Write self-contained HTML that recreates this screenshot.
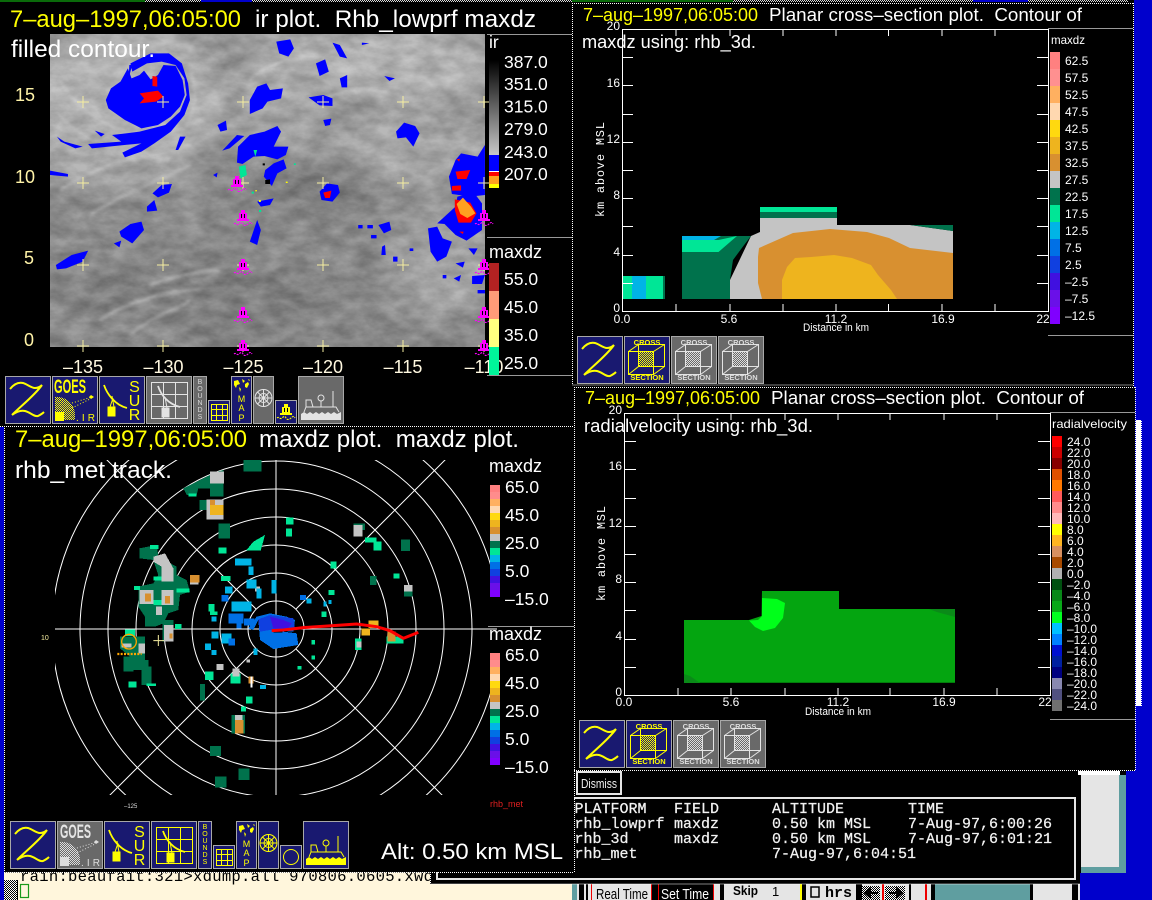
<!DOCTYPE html>
<html><head><meta charset="utf-8"><title>xdump</title>
<style>
html,body{margin:0;padding:0;background:#000;width:1152px;height:900px;overflow:hidden}
svg{display:block}
text{font-family:"Liberation Sans",sans-serif;white-space:pre}
.m{font-family:"Liberation Mono",monospace;font-size:15px;fill:#f2f2f2;stroke:#f2f2f2;stroke-width:.25}
.w{fill:#fff}.y{fill:#ff0}
.t{fill:#fff;font-size:12px}
.s{fill:#fff;font-size:11px}
.v{fill:#fff;font-size:17.5px}
.p{shape-rendering:crispEdges}
</style></head><body>
<svg width="1152" height="900" viewBox="0 0 1152 900" xmlns="http://www.w3.org/2000/svg">
<defs>
<clipPath id="satc"><rect x="50" y="34" width="435" height="313"/></clipPath>
<clipPath id="radc"><rect x="55" y="460" width="442" height="335"/></clipPath>
<filter id="bl" x="-20%" y="-20%" width="140%" height="140%"><feGaussianBlur stdDeviation="11"/></filter>
<filter id="bl2" x="-20%" y="-20%" width="140%" height="140%"><feGaussianBlur stdDeviation="1.500"/></filter>
<filter id="tb" color-interpolation-filters="sRGB" x="0" y="0" width="100%" height="100%"><feTurbulence type="fractalNoise" baseFrequency="0.045 0.08" numOctaves="4" seed="7"/><feColorMatrix type="matrix" values="1.6 0 0 0 -.3  1.6 0 0 0 -.3  1.6 0 0 0 -.3  0 0 0 0 .16"/></filter>
<pattern id="ck" width="2" height="2" patternUnits="userSpaceOnUse"><rect width="1" height="1" fill="#ff0"/><rect x="1" y="1" width="1" height="1" fill="#ff0"/></pattern>
<pattern id="ckw" width="2" height="2" patternUnits="userSpaceOnUse"><rect width="1" height="1" fill="#ddd"/><rect x="1" y="1" width="1" height="1" fill="#ddd"/></pattern>
<pattern id="ckb" width="2" height="2" patternUnits="userSpaceOnUse"><rect width="2" height="2" fill="#fff"/><rect width="1" height="1" fill="#000"/><rect x="1" y="1" width="1" height="1" fill="#000"/></pattern>
<symbol id="z" viewBox="0 0 46 48" width="46" height="48"><path d="M5 13C9 8 13 6 18 7C22 8 26 12 30 12C33 12 35 11 37 9C30 19 16 30 7 39C11 36 15 34 20 35C25 36 29 41 33 40C35 39 37 38 39 36" fill="none" stroke="currentColor" stroke-width="2"/></symbol>
<symbol id="sur" viewBox="0 0 46 48" width="46" height="48"><path d="M5 9C8 18 16 29 28 32" fill="none" stroke="currentColor" stroke-width="1.800"/><path d="M13 20L15 31M9 31H16V40H9ZM11 31L14 22" fill="currentColor" stroke="currentColor"/></symbol>
<symbol id="gr" viewBox="0 0 46 48" width="46" height="48"><path d="M5.500 6.500H41.500V42.500H5.500ZM17.500 6.500V42.500M29.500 6.500V42.500M5.500 18.500H41.500M5.500 30.500H41.500" fill="none" stroke="currentColor" stroke-width="1"/><path d="M12 10C15 19 22 28 34 31" fill="none" stroke="currentColor" stroke-width="1.800"/><path d="M19 21L21 32M16 32H23V41H16Z" fill="currentColor" stroke="currentColor"/></symbol>
<symbol id="sg" viewBox="0 0 22 23" width="22" height="23"><path d="M3.500 4.500H19.500V20.500H3.500ZM8.500 4.500V20.500M14.500 4.500V20.500M3.500 9.500H19.500M3.500 15.500H19.500" fill="none" stroke="currentColor"/></symbol>
<symbol id="gl" viewBox="0 0 21 48" width="21" height="48"><g fill="none" stroke="currentColor"><circle cx="10.500" cy="22" r="8.500"/><circle cx="10.500" cy="22" r="4.500"/><path d="M10.500 13V31M2 22H19M4.500 16L16.500 28M16.500 16L4.500 28"/></g></symbol>
<symbol id="bu" viewBox="0 0 22 23" width="22" height="23"><path d="M9 4H13V7H15V13H17V15H5V13H7V7H9Z" fill="currentColor"/><path d="M9 8H10V12H9ZM12 8H13V12H12Z" fill="#000"/><path d="M2 18C4 16 5 20 7 18S10 16 11 18S14 20 16 18S19 16 20 18" fill="none" stroke="currentColor" stroke-width="1.100" stroke-dasharray="2 1"/></symbol>
<symbol id="sh" viewBox="0 0 46 48" width="46" height="48"><g fill="none" stroke="currentColor"><path d="M6 36L8 31H15L13 24H8V31M15 31H38L41 36"/><circle cx="23" cy="22" r="3"/><path d="M23 25V31M35 15V31"/></g><path d="M3 44V38L6 36L9 38L12 36L15 38L18 36L21 38L24 36L27 38L30 36L33 38L36 36L39 38L43 36V44Z" fill="currentColor"/></symbol>
<symbol id="cr" viewBox="0 0 46 48" width="46" height="48"><g fill="none" stroke="currentColor"><path d="M4.500 15.500H29.500V38.500H4.500ZM14.500 8.500H40.500V30.500H14.500ZM4.500 15.500L14.500 8.500M29.500 15.500L40.500 8.500M29.500 38.500L40.500 30.500M4.500 38.500L14.500 30.500M14.500 8.500V30.500"/></g></symbol>
<symbol id="mp" viewBox="0 0 21 20" width="21" height="20"><path d="M3 5L7 4L9 8L6 9L5 12L3 9ZM11 3L14 5L12 7ZM14 8L17 6L18 8L16 12L14 11ZM8 11L10 13L9 16ZM17 3L19 4L18 5Z" fill="currentColor"/></symbol>
</defs>

<!-- desktop background -->
<rect width="1152" height="900" fill="#000"/>
<rect x="1126" y="0" width="26" height="900" fill="#0000cc"/>
<rect x="1080" y="873" width="72" height="27" fill="#0000cc"/>
<rect x="574" y="0" width="560" height="387" fill="#000"/>
<rect x="574" y="387" width="561" height="384" fill="#000"/>
<rect x="1135" y="420" width="7" height="286" fill="#fff"/>
<path d="M1135.500 420V706M1141.500 420V706" stroke="#0000cc" stroke-dasharray="1 1"/>
<rect x="1081" y="775" width="45" height="98" fill="#5f9ea0"/>
<rect x="1081" y="775" width="38" height="92" fill="#e5e5e5"/>
<rect x="1045" y="771" width="75" height="4" fill="#fff"/>

<!-- bottom bar -->
<g class="p">
<rect x="430" y="884" width="650" height="16" fill="#e5e5e5"/>
<rect x="430" y="884" width="142" height="16" fill="#fff6dc"/>
<rect x="572" y="884" width="5" height="16" fill="#5f9ea0"/>
<rect x="579" y="884" width="5" height="16" fill="#000"/><rect x="586" y="884" width="2" height="16" fill="#000"/>
<rect x="591" y="884" width="1" height="16" fill="#e00"/>
<rect x="651" y="884" width="1" height="16" fill="#e00"/>
<rect x="652" y="884" width="6" height="16" fill="#000"/>
<rect x="658" y="884" width="1" height="16" fill="#e00"/>
<rect x="659" y="884" width="54" height="16" fill="#000"/>
<rect x="713" y="884" width="1" height="16" fill="#e00"/>
<rect x="720" y="884" width="4" height="16" fill="#000"/>
<rect x="800" y="884" width="2" height="16" fill="#ff0"/>
<rect x="802" y="884" width="4" height="16" fill="#000"/>
<rect x="856" y="884" width="6" height="16" fill="#000"/>
<rect x="862" y="886" width="18" height="14" fill="url(#ckb)"/>
<rect x="882" y="884" width="2" height="16" fill="#e00"/>
<rect x="885" y="886" width="20" height="14" fill="url(#ckb)"/>
<rect x="909" y="884" width="2" height="16" fill="#000"/>
<rect x="925" y="884" width="2" height="16" fill="#e00"/>
<rect x="931" y="884" width="4" height="16" fill="#000"/>
<rect x="935" y="884" width="95" height="16" fill="#5f9ea0"/>
<rect x="1030" y="884" width="3" height="16" fill="#000"/>
<rect x="1072" y="884" width="6" height="16" fill="#000"/>
</g>
<text x="596" y="899" font-size="15" fill="#000" textLength="52" lengthAdjust="spacingAndGlyphs">Real Time</text>
<text x="661" y="899" font-size="15" fill="#fff" textLength="48" lengthAdjust="spacingAndGlyphs">Set Time</text>
<text x="733" y="895" font-size="13" font-weight="bold" fill="#000" textLength="25" lengthAdjust="spacingAndGlyphs">Skip</text>
<text x="772" y="896" font-size="13" fill="#000">1</text>
<rect x="811" y="887" width="8" height="10" fill="none" stroke="#000" stroke-width="1.500"/>
<text x="825" y="897" font-size="15" font-weight="bold" fill="#000" style="font-family:'Liberation Mono',monospace">hrs</text>
<path d="M865 893H878M865 893L870 889V897Z" stroke="#000" stroke-width="2" fill="#000"/>
<path d="M889 893H902M902 893L897 889V897Z" stroke="#000" stroke-width="2" fill="#000"/>

<!-- terminal -->
<rect x="0" y="872" width="430" height="28" fill="#fff6dc"/>
<rect x="0" y="427" width="4" height="473" fill="#0000cc"/>
<rect x="4" y="880" width="13" height="20" fill="url(#ckb)"/>
<rect x="17" y="880" width="1" height="20" fill="#000"/>
<text x="20" y="881" style="font-family:'Liberation Mono',monospace;font-size:15.600px" fill="#000" textLength="413" lengthAdjust="spacing">rain:beaufait:321&gt;xdump.all 970806.0605.xwd</text>
<rect x="20.500" y="884.500" width="8" height="13" fill="none" stroke="#1a9a1a" stroke-width="1.200"/>
<rect x="4" y="868" width="570" height="4.500" fill="#000"/>

<!-- table panel -->
<rect x="430" y="771" width="648" height="113" fill="#000"/>
<path d="M574 798H1075V879H437V872" fill="none" stroke="#e6e6e6" stroke-width="2"/>
<path d="M430.500 884H1080M430.500 872V884" stroke="#fff" stroke-dasharray="1 1" fill="none"/>
<rect x="577" y="772" width="44" height="22" fill="#000" stroke="#e6e6e6" stroke-width="2"/>
<text x="581" y="788" font-size="13" fill="#eee" textLength="36" lengthAdjust="spacingAndGlyphs">Dismiss</text>
<text class="m" x="574.500" y="813">PLATFORM</text><text class="m" x="674" y="813">FIELD</text><text class="m" x="772" y="813">ALTITUDE</text><text class="m" x="908" y="813">TIME</text>
<text class="m" x="574.500" y="828">rhb_lowprf</text><text class="m" x="674" y="828">maxdz</text><text class="m" x="772" y="828">0.50 km MSL</text><text class="m" x="908" y="828">7-Aug-97,6:00:26</text>
<text class="m" x="574.500" y="843">rhb_3d</text><text class="m" x="674" y="843">maxdz</text><text class="m" x="772" y="843">0.50 km MSL</text><text class="m" x="908" y="843">7-Aug-97,6:01:21</text>
<text class="m" x="574.500" y="858">rhb_met</text><text class="m" x="772" y="858">7-Aug-97,6:04:51</text>

<!-- top strips -->
<g class="p">
<rect x="0" y="0" width="145" height="2" fill="#0a6a0a"/>
<rect x="145" y="0" width="56" height="2" fill="url(#ckw)"/>
<rect x="201" y="0" width="51" height="2" fill="#0000cc"/>
<rect x="252" y="0" width="320" height="2" fill="url(#ckw)"/>
<rect x="572" y="0" width="161" height="2" fill="#0a6a0a"/>
<rect x="733" y="0" width="240" height="2" fill="url(#ckw)"/>
<rect x="973" y="0" width="55" height="2" fill="#0000cc"/>
<rect x="1028" y="0" width="100" height="2" fill="url(#ckw)"/>
</g>

<!-- SATELLITE -->
<g clip-path="url(#satc)">
<rect x="50" y="34" width="435" height="313" fill="#8a8a8a"/>
<g filter="url(#bl)">
<ellipse cx="130" cy="95" rx="100" ry="70" fill="#bcbcbc"/>
<ellipse cx="280" cy="65" rx="120" ry="40" fill="#b0b0b0"/>
<ellipse cx="410" cy="65" rx="90" ry="40" fill="#bbb"/>
<ellipse cx="400" cy="150" rx="70" ry="40" fill="#acacac"/>
<ellipse cx="70" cy="150" rx="40" ry="30" fill="#b0b0b0"/>
<ellipse cx="130" cy="175" rx="80" ry="18" fill="#a8a8a8"/>
<ellipse cx="440" cy="265" rx="55" ry="55" fill="#a8a8a8"/>
<ellipse cx="475" cy="170" rx="18" ry="60" fill="#b2b2b2"/>
<ellipse cx="280" cy="130" rx="55" ry="25" fill="#aaa"/>
<ellipse cx="230" cy="60" rx="22" ry="20" fill="#8e8e8e"/>
<ellipse cx="320" cy="185" rx="60" ry="25" fill="#7e7e7e"/>
<ellipse cx="200" cy="300" rx="140" ry="35" fill="#7f7f7f"/>
<ellipse cx="110" cy="330" rx="70" ry="16" fill="#8c8c8c"/>
<ellipse cx="350" cy="290" rx="50" ry="30" fill="#888"/>
<ellipse cx="140" cy="220" rx="80" ry="30" fill="#8e8e8e"/>
</g>
<g filter="url(#bl2)" fill="none" stroke="#d4d4d4" stroke-width="2" opacity=".8">
<path d="M60 80C90 130 150 150 200 120M55 110C90 150 140 165 190 145M190 70C200 95 195 120 175 140M60 190C100 165 140 150 170 160M90 215C130 190 160 180 190 165"/>
<path d="M150 285C175 275 200 272 220 270M100 320C130 300 170 290 200 290M130 335C160 310 180 310 190 300M250 80C270 60 310 50 340 60M300 110C330 90 370 85 400 95"/>
</g>
<rect x="50" y="34" width="435" height="313" filter="url(#tb)"/>
<g transform="scale(.36738 .33333)">
<path fill="#00f" d="M288 300L302 265L328 245L348 205L358 235L380 225L392 212L410 238L430 225L445 195L478 198L497 240L503 285L490 320L465 350L430 375L385 385L340 360L295 325Z"/>
<path fill="#00f" d="M355 190L410 160L460 160L495 190L512 250L517 300L502 345L465 395L420 430L385 455L340 472L333 458L385 430L250 445L240 432L330 425L305 405L380 395L450 375L490 335L508 285L502 235L478 195L440 185L400 190L360 215Z"/>
<path fill="#00f" d="M155 410L175 425L225 440L205 445L165 425ZM258 392L285 402L275 410ZM490 410L505 410L485 450L478 450ZM352 195L360 195L350 235Z"/>
<path fill="#f00" d="M380 280L430 272L445 290L425 305L380 310L392 295ZM415 228L428 230L428 260L415 258Z"/>
<path fill="#00f" d="M752 125L790 118L800 145L785 170L760 160ZM905 128L925 135L945 175L925 170ZM860 190L885 178L895 215L870 228ZM925 235L945 225L945 262L930 262ZM1046 228L1075 235L1060 243ZM985 128L1005 130L985 135Z"/>
<path fill="#00f" d="M680 300L700 260L725 250L735 270L770 265L765 295L728 305L715 325L680 342ZM840 292L880 285L905 295L905 318L870 316ZM592 375L615 362L618 390L600 395ZM880 360L902 356L898 375L885 378Z"/>
<path fill="#00f" d="M1078 395L1100 368L1130 378L1142 400L1125 440L1105 412L1082 415ZM605 452L645 405L665 408L625 445ZM648 440L680 405L720 395L755 378L765 395L745 440L785 440L778 465L755 478L720 468L690 470L660 492L645 488ZM722 510L745 490L772 478L780 505L755 520L740 558L718 530Z"/>
<path fill="#00f" d="M870 575L890 550L920 555L925 578L905 605L875 600ZM415 580L440 555L468 552L460 578L430 592ZM400 620L420 600L428 632L400 635ZM325 695L355 672L385 665L392 690L360 730L330 710ZM310 730L330 722L325 742ZM152 795L195 765L240 752L225 785L180 805L155 808ZM136 512L185 522L185 530L136 525ZM580 525L592 518L590 532ZM680 725L700 660L710 690L700 735ZM700 605L745 595L735 615L710 620Z"/>
<path fill="#00f" d="M1030 675L1060 665L1065 690L1045 700ZM1040 740L1048 735L1050 765L1038 765ZM1165 685L1190 680L1205 715L1230 725L1215 770L1190 785L1172 755ZM975 675h12v10h-12ZM1000 675h15v10h-15ZM1010 705h15v10h-15ZM1070 770h12v15h-12ZM1115 745h10v8h-10Z"/>
<path fill="#00f" d="M1222 530L1240 480L1255 460L1300 470L1320 435V585L1280 590L1230 582ZM1190 670L1240 620L1245 590L1290 578L1312 610L1312 690L1270 722L1240 705L1210 672ZM1275 745L1300 745L1290 765ZM1240 790L1265 785L1260 803ZM1285 828L1320 825L1312 852L1285 852ZM1235 835L1255 825L1250 845ZM1205 825h10v10h-10ZM1300 870h20v10h-20Z"/>
<path fill="#f00" d="M1240 515L1280 510L1270 537L1245 537ZM1230 558L1255 556L1255 572L1230 572ZM1243 478L1252 476L1250 485ZM1238 598L1280 608L1297 640L1282 668L1248 668L1238 630ZM880 578L902 572L898 594L885 594ZM1250 695L1262 695L1260 702Z"/>
<path fill="#ffa020" d="M1243 612L1260 593L1282 620L1294 640L1272 654L1253 642Z"/>
<path fill="#00e696" d="M650 500L668 495L672 525L655 535ZM690 450L700 450L695 470Z"/>
<path fill="#000" d="M722 540L735 538L735 552L722 552ZM715 490h6v6h-6Z"/>
<path fill="#ff0" d="M695 570h4v4h-4ZM705 600h5v6h-5ZM778 545h5v4h-5Z"/>
<path fill="#00e696" d="M685 575h6v6h-6ZM705 630h6v6h-6ZM800 490h5v5h-5Z"/>
</g>
</g>
<!-- crosses -->
<path d="M77 102H89M83 96V108M157 102H169M163 96V108M237 102H249M243 96V108M317 102H329M323 96V108M397 102H409M403 96V108M478 102H490M484 96V108M77 183H89M83 177V189M157 183H169M163 177V189M237 183H249M243 177V189M317 183H329M323 177V189M397 183H409M403 177V189M478 183H490M484 177V189M77 265H89M83 259V271M157 265H169M163 259V271M237 265H249M243 259V271M317 265H329M323 259V271M397 265H409M403 259V271M478 265H490M484 259V271M77 346H89M83 340V352M157 346H169M163 340V352M237 346H249M243 340V352M317 346H329M323 340V352M397 346H409M403 340V352M478 346H490M484 340V352" stroke="#f6eea0" stroke-width="1" fill="none"/>
<g style="color:#ff00ff">
<use href="#bu" x="226" y="172" width="22" height="23"/><use href="#bu" x="232" y="206" width="22" height="23"/><use href="#bu" x="232" y="255" width="22" height="23"/><use href="#bu" x="232" y="303" width="22" height="23"/><use href="#bu" x="232" y="336" width="22" height="23"/><use href="#bu" x="473" y="206" width="22" height="23"/><use href="#bu" x="473" y="255" width="22" height="23"/><use href="#bu" x="473" y="303" width="22" height="23"/><use href="#bu" x="473" y="336" width="22" height="23"/>
</g>

<!-- top-left titles and axes -->
<text class="y" x="10" y="27" font-size="24" textLength="231" lengthAdjust="spacingAndGlyphs">7–aug–1997,06:05:00</text>
<text class="w" x="255" y="27" font-size="24" textLength="281" lengthAdjust="spacingAndGlyphs">ir plot.  Rhb_lowprf maxdz</text>
<text class="w" x="11" y="57" font-size="24" textLength="144" lengthAdjust="spacingAndGlyphs">filled contour.</text>
<g fill="#fff3a8" font-size="18"><text x="15" y="101">15</text><text x="15" y="183">10</text><text x="24" y="264">5</text><text x="24" y="346">0</text></g>
<g fill="#fff8e0" font-size="18" text-anchor="middle"><text x="83" y="373">–135</text><text x="163.500" y="373">–130</text><text x="243.500" y="373">–125</text><text x="323" y="373">–120</text><text x="403" y="373">–115</text><text x="484" y="373">–110</text></g>
<!-- ir bar -->
<path d="M487 34.500H572M487 237.500H572M487 375.500H572" stroke="#999"/>
<text class="v" x="489" y="48">ir</text>
<linearGradient id="irg" x1="0" y1="0" x2="0" y2="1"><stop offset="0" stop-color="#000"/><stop offset="1" stop-color="#c8c8c8"/></linearGradient>
<rect x="489" y="60" width="10" height="95" fill="url(#irg)"/>
<g class="p"><rect x="489" y="155" width="10" height="16" fill="#00f"/><rect x="489" y="171" width="10" height="1" fill="#fff"/><rect x="489" y="172" width="10" height="4" fill="#f00"/><rect x="489" y="176" width="10" height="8" fill="#ffa020"/><rect x="489" y="184" width="10" height="4" fill="#ff0"/></g>
<g class="v"><text x="504" y="68">387.0</text><text x="504" y="90">351.0</text><text x="504" y="112.500">315.0</text><text x="504" y="135">279.0</text><text x="504" y="158">243.0</text><text x="504" y="180">207.0</text></g>
<text class="w" x="489" y="258" font-size="18">maxdz</text>
<g class="p"><rect x="489" y="263" width="10" height="28" fill="#b22222"/><rect x="489" y="291" width="10" height="28" fill="#ff9b78"/><rect x="489" y="319" width="10" height="28" fill="#ffff80"/><rect x="489" y="347" width="10" height="28" fill="#00f59a"/></g>
<g class="v"><text x="504" y="285">55.0</text><text x="504" y="313">45.0</text><text x="504" y="341">35.0</text><text x="504" y="369">25.0</text></g>

<!-- top-left buttons -->
<g stroke="#a8a8a8" class="p">
<rect x="5.500" y="376.500" width="45" height="47" fill="#191970"/><rect x="52.500" y="376.500" width="45" height="47" fill="#191970"/><rect x="99.500" y="376.500" width="45" height="47" fill="#191970"/><rect x="146.500" y="376.500" width="45" height="47" fill="#696969"/><rect x="193.500" y="376.500" width="13" height="47" fill="#696969"/><rect x="208.500" y="400.500" width="21" height="23" fill="#191970"/><rect x="231.500" y="376.500" width="20" height="47" fill="#191970"/><rect x="253.500" y="376.500" width="20" height="47" fill="#696969"/><rect x="275.500" y="400.500" width="21" height="23" fill="#191970"/><rect x="298.500" y="376.500" width="45" height="47" fill="#696969"/>
</g>
<g style="color:#ff0"><use href="#z" x="5" y="376" width="46" height="48"/><use href="#sur" x="99" y="376" width="46" height="48"/><use href="#sg" x="208" y="400" width="22" height="23"/><use href="#mp" x="231" y="376" width="21" height="20"/><use href="#bu" x="275" y="400" width="22" height="23"/></g>
<g style="color:#e4e4e4"><use href="#gr" x="146" y="376" width="46" height="48"/><use href="#gl" x="253" y="376" width="21" height="48"/><use href="#sh" x="298" y="376" width="46" height="48"/></g>
<text x="54" y="393" font-size="19" font-weight="bold" fill="#ff0" textLength="32" lengthAdjust="spacingAndGlyphs">GOES</text>
<path d="M55 420V397A18 18 0 0 1 75 416V420Z" fill="url(#ck)"/><path d="M72 403L92 397M72 408L90 399" stroke="#ff0" stroke-dasharray="1 2"/><path d="M91 395l3 2-3 2-2-2z" fill="#ff0"/><rect x="55" y="412" width="9" height="9" fill="#ff0"/>
<text x="76" y="421" font-size="10" fill="#ff0" textLength="19" lengthAdjust="spacing">.IR</text>
<g font-size="16" fill="#ff0" text-anchor="middle"><text x="134.500" y="392">S</text><text x="134.500" y="406">U</text><text x="134.500" y="420">R</text></g>
<g font-size="7" fill="#d8d8d8" text-anchor="middle"><text x="200" y="384">B</text><text x="200" y="391">O</text><text x="200" y="398">U</text><text x="200" y="405">N</text><text x="200" y="412">D</text><text x="200" y="419">S</text></g>
<g font-size="9" fill="#ff0" text-anchor="middle"><text x="241.500" y="402">M</text><text x="241.500" y="411">A</text><text x="241.500" y="421">P</text></g>

<!-- dotted frames -->
<g fill="none" stroke="#fff" stroke-dasharray="1 1">
<path d="M0 426.500H573M4.500 426V872M574.500 427V872M4 872.500H574"/>
<path d="M572.500 3V385H1133M572 3.500H1133M1133.500 3V386"/>
<path d="M574.500 387V770M574 387.500H1135M1135.500 387V770.500H574"/>
</g>

<!-- RADAR -->
<g clip-path="url(#radc)">
<g fill="none" stroke="#fff" stroke-width="1">
<circle cx="276" cy="629" r="28"/><circle cx="276" cy="629" r="56"/><circle cx="276" cy="629" r="84"/><circle cx="276" cy="629" r="112"/><circle cx="276" cy="629" r="140"/><circle cx="276" cy="629" r="168"/><circle cx="276" cy="629" r="196"/><circle cx="276" cy="629" r="224"/>
<path d="M55 629H497M276 460V795M256 609L86 439M296 609L466 439M256 649L90 815M296 649L462 815"/>
</g>
<g transform="translate(40 460) scale(.33333)" class="p">
<g fill="#00724c">
<path d="M430 85L510 45V40L550 30V110H510V85H475L470 105H440Z"/>
<rect x="610" y="0" width="55" height="35"/><rect x="535" y="190" width="35" height="45"/><rect x="478" y="120" width="30" height="30"/>
<path d="M298 265L350 255L355 290L410 320L410 345L440 360L450 395L420 405L415 450L385 460L370 490L345 500H315V470L295 440V380L340 370L355 345L340 300L298 295Z"/>
<rect x="368" y="480" width="32" height="65"/>
<path d="M240 530H315V600H325V630H280V635H250V590H270L240 565Z"/><path d="M305 620H335V675H305Z"/>
<rect x="990" y="348" width="20" height="27"/><rect x="1083" y="238" width="27" height="35"/><rect x="1092" y="385" width="25" height="25"/><rect x="940" y="190" width="35" height="20"/>
<rect x="480" y="672" width="15" height="50"/><rect x="510" y="858" width="33" height="30"/><rect x="595" y="925" width="33" height="35"/><rect x="525" y="950" width="35" height="32"/><rect x="575" y="765" width="40" height="55"/>
</g>
<g fill="#00e696">
<rect x="340" y="350" width="45" height="12"/><rect x="282" y="378" width="18" height="12"/><rect x="410" y="385" width="38" height="12"/><rect x="330" y="255" width="25" height="12"/><rect x="445" y="100" width="25" height="10"/>
<path d="M618 272L640 245L675 225L662 272Z"/><rect x="535" y="262" width="25" height="18"/><rect x="738" y="172" width="22" height="22"/><rect x="738" y="205" width="18" height="25"/>
<rect x="975" y="232" width="35" height="15"/><rect x="1000" y="245" width="25" height="27"/><rect x="1060" y="340" width="18" height="15"/><rect x="872" y="305" width="17" height="20"/><rect x="866" y="390" width="18" height="15"/>
<rect x="405" y="492" width="20" height="15"/><rect x="255" y="508" width="30" height="20"/><rect x="265" y="665" width="25" height="18"/><rect x="320" y="670" width="28" height="8"/><rect x="340" y="420" width="25" height="15"/>
<rect x="543" y="348" width="28" height="15"/><rect x="505" y="432" width="18" height="22"/><rect x="510" y="455" width="22" height="10"/><rect x="495" y="635" width="25" height="25"/><rect x="572" y="640" width="30" height="30"/><rect x="618" y="710" width="20" height="20"/><rect x="603" y="740" width="15" height="15"/><rect x="575" y="462" width="18" height="15"/><rect x="1040" y="530" width="50" height="20"/><rect x="945" y="535" width="20" height="35"/><rect x="815" y="587" width="10" height="12"/><rect x="845" y="455" width="14" height="16"/><rect x="772" y="618" width="12" height="10"/><rect x="815" y="540" width="10" height="14"/>
</g>
<g fill="#c4c4c4">
<rect x="510" y="35" width="42" height="35"/><rect x="500" y="118" width="50" height="60"/>
<path d="M340 290L375 280L400 325V365H365V320L340 305Z"/><rect x="298" y="390" width="42" height="42"/><rect x="365" y="390" width="35" height="45"/><rect x="348" y="440" width="18" height="25"/><rect x="372" y="495" width="28" height="50"/><rect x="245" y="550" width="30" height="12"/><rect x="295" y="550" width="20" height="30"/>
<rect x="940" y="195" width="28" height="35"/><rect x="1092" y="375" width="25" height="20"/><rect x="950" y="545" width="15" height="18"/>
<rect x="530" y="612" width="20" height="18"/><rect x="578" y="625" width="20" height="25"/><rect x="585" y="765" width="22" height="20"/><rect x="645" y="380" width="15" height="15"/><rect x="620" y="598" width="10" height="10"/><rect x="450" y="365" width="25" height="8"/>
</g>
<g fill="#d89030">
<rect x="450" y="345" width="28" height="22"/><rect x="315" y="400" width="18" height="25"/><rect x="375" y="408" width="15" height="22"/><rect x="388" y="520" width="10" height="15"/><rect x="1042" y="515" width="25" height="30"/><rect x="585" y="780" width="25" height="40"/><rect x="510" y="120" width="15" height="15"/><rect x="625" y="650" width="15" height="20"/>
</g>
<g fill="#eeb41e"><rect x="510" y="135" width="40" height="30"/><rect x="965" y="505" width="25" height="22"/><rect x="985" y="482" width="30" height="22"/></g>
<g fill="#00b4e6">
<rect x="585" y="295" width="50" height="22"/><rect x="625" y="320" width="15" height="25"/><rect x="620" y="358" width="30" height="28"/><rect x="650" y="385" width="15" height="30"/><rect x="695" y="360" width="15" height="40"/><rect x="555" y="380" width="22" height="20"/><rect x="515" y="470" width="15" height="15"/><rect x="575" y="425" width="60" height="30"/><rect x="515" y="515" width="20" height="20"/><rect x="545" y="520" width="30" height="30"/><rect x="495" y="550" width="18" height="20"/><rect x="515" y="570" width="15" height="15"/><rect x="660" y="675" width="18" height="12"/><rect x="640" y="565" width="12" height="20"/><rect x="865" y="420" width="10" height="12"/><rect x="850" y="425" width="10" height="15"/><rect x="800" y="415" width="15" height="15"/>
</g>
<g fill="#0070e6">
<rect x="545" y="405" width="20" height="20"/><rect x="565" y="460" width="45" height="30"/><rect x="590" y="490" width="15" height="15"/><rect x="612" y="475" width="32" height="22"/><rect x="780" y="405" width="18" height="15"/><rect x="565" y="535" width="20" height="22"/>
<path d="M690 510L770 520L775 555L700 567L660 540L655 480L640 510L625 505L650 470L690 460L740 470L765 480L760 515Z"/>
</g>
<g fill="#1040e0"><path d="M690 465L760 475L765 505L730 515L690 510L660 515L655 478Z"/></g>
<g fill="#4010e0"><path d="M690 470L730 480L755 490L745 505L700 505Z"/></g>
<rect x="700" y="508" width="28" height="10" fill="#000"/>
<rect x="632" y="650" width="6" height="32" fill="#fff"/>
</g>
<g transform="translate(40 460) scale(.33333)">
<circle cx="267" cy="545" r="22" fill="none" stroke="#ffa500" stroke-width="4"/>
<path d="M232 582H305" stroke="#ffa500" stroke-width="7" stroke-dasharray="6 4"/>
<path d="M340 542H372M355 525V558" stroke="#f6eea0" stroke-width="3"/>
<path d="M695 512L730 510L790 503L880 497L950 492L1010 500L1050 512L1090 535L1135 517" fill="none" stroke="#f00" stroke-width="9"/>
</g>
</g>

<!-- bottom-left labels -->
<text class="y" x="15" y="447" font-size="24" textLength="232" lengthAdjust="spacingAndGlyphs">7–aug–1997,06:05:00</text>
<text class="w" x="259" y="447" font-size="24" textLength="260" lengthAdjust="spacingAndGlyphs">maxdz plot.  maxdz plot.</text>
<text class="w" x="15" y="478" font-size="24" textLength="157" lengthAdjust="spacingAndGlyphs">rhb_met track.</text>
<text x="489" y="472" font-size="18" class="w">maxdz</text>
<path d="M488 626.500H574" stroke="#999"/>
<text x="489" y="640" font-size="18" class="w">maxdz</text>
<g class="p">
<rect x="490" y="485" width="10" height="7" fill="#ff8080"/><rect x="490" y="492" width="10" height="7" fill="#ff8c8c"/><rect x="490" y="499" width="10" height="7" fill="#ffb060"/><rect x="490" y="506" width="10" height="7" fill="#ffd8b0"/><rect x="490" y="513" width="10" height="7" fill="#ffd90f"/><rect x="490" y="520" width="10" height="7" fill="#eeb41e"/><rect x="490" y="527" width="10" height="7" fill="#d89030"/><rect x="490" y="534" width="10" height="7" fill="#c4c4c4"/><rect x="490" y="541" width="10" height="7" fill="#00724c"/><rect x="490" y="548" width="10" height="7" fill="#00e696"/><rect x="490" y="555" width="10" height="7" fill="#00b4e6"/><rect x="490" y="562" width="10" height="7" fill="#0070e6"/><rect x="490" y="569" width="10" height="7" fill="#1040e0"/><rect x="490" y="576" width="10" height="7" fill="#4010e0"/><rect x="490" y="583" width="10" height="7" fill="#6a10e8"/><rect x="490" y="590" width="10" height="7" fill="#8000ff"/>
<rect x="490" y="653" width="10" height="7" fill="#ff8080"/><rect x="490" y="660" width="10" height="7" fill="#ff8c8c"/><rect x="490" y="667" width="10" height="7" fill="#ffb060"/><rect x="490" y="674" width="10" height="7" fill="#ffd8b0"/><rect x="490" y="681" width="10" height="7" fill="#ffd90f"/><rect x="490" y="688" width="10" height="7" fill="#eeb41e"/><rect x="490" y="695" width="10" height="7" fill="#d89030"/><rect x="490" y="702" width="10" height="7" fill="#c4c4c4"/><rect x="490" y="709" width="10" height="7" fill="#00724c"/><rect x="490" y="716" width="10" height="7" fill="#00e696"/><rect x="490" y="723" width="10" height="7" fill="#00b4e6"/><rect x="490" y="730" width="10" height="7" fill="#0070e6"/><rect x="490" y="737" width="10" height="7" fill="#1040e0"/><rect x="490" y="744" width="10" height="7" fill="#4010e0"/><rect x="490" y="751" width="10" height="7" fill="#6a10e8"/><rect x="490" y="758" width="10" height="7" fill="#8000ff"/>
</g>
<g class="v"><text x="505" y="493">65.0</text><text x="505" y="521">45.0</text><text x="505" y="549">25.0</text><text x="505" y="577">5.0</text><text x="505" y="605">–15.0</text><text x="505" y="661">65.0</text><text x="505" y="689">45.0</text><text x="505" y="717">25.0</text><text x="505" y="745">5.0</text><text x="505" y="773">–15.0</text></g>
<text x="490" y="807" font-size="9" fill="#e02020">rhb_met</text>
<text x="124" y="808" font-size="6" fill="#ddd">–125</text>
<text x="41" y="640" font-size="7" fill="#f6eea0">10</text>
<text class="w" x="381" y="859" font-size="22" textLength="182" lengthAdjust="spacingAndGlyphs">Alt: 0.50 km MSL</text>

<!-- bottom-left buttons -->
<g stroke="#a8a8a8" class="p">
<rect x="10.500" y="821.500" width="45" height="47" fill="#191970"/><rect x="57.500" y="821.500" width="45" height="47" fill="#696969"/><rect x="104.500" y="821.500" width="45" height="47" fill="#191970"/><rect x="151.500" y="821.500" width="45" height="47" fill="#191970"/><rect x="198.500" y="821.500" width="13" height="47" fill="#191970"/><rect x="213.500" y="845.500" width="21" height="23" fill="#191970"/><rect x="236.500" y="821.500" width="20" height="47" fill="#191970"/><rect x="258.500" y="821.500" width="20" height="47" fill="#191970"/><rect x="280.500" y="845.500" width="21" height="23" fill="#191970"/><rect x="303.500" y="821.500" width="45" height="47" fill="#191970"/>
</g>
<g style="color:#ff0"><use href="#z" x="10" y="821" width="46" height="48"/><use href="#sur" x="104" y="821" width="46" height="48"/><use href="#gr" x="151" y="821" width="46" height="48"/><use href="#mp" x="236" y="821" width="21" height="20"/><use href="#gl" x="258" y="821" width="21" height="48"/><use href="#sh" x="303" y="821" width="46" height="48"/></g>
<use href="#sg" x="213" y="845" width="22" height="23" style="color:#ff0"/>
<circle cx="291" cy="857" r="7.500" fill="none" stroke="#ff0"/>
<text x="60" y="838" font-size="19" font-weight="bold" fill="#e4e4e4" textLength="31" lengthAdjust="spacingAndGlyphs">GOES</text>
<path d="M60 865V842A18 18 0 0 1 80 861V865Z" fill="url(#ckw)"/><path d="M77 848L97 842M77 853L95 844" stroke="#ddd" stroke-dasharray="1 2"/><path d="M96 840l3 2-3 2-2-2z" fill="#ddd"/><rect x="60" y="857" width="9" height="9" fill="#ddd"/>
<text x="81" y="866" font-size="10" fill="#ddd" textLength="19" lengthAdjust="spacing">.IR</text>
<g font-size="16" fill="#ff0" text-anchor="middle"><text x="139.500" y="837">S</text><text x="139.500" y="851">U</text><text x="139.500" y="865">R</text></g>
<g font-size="7" fill="#ff0" text-anchor="middle"><text x="205" y="829">B</text><text x="205" y="836">O</text><text x="205" y="843">U</text><text x="205" y="850">N</text><text x="205" y="857">D</text><text x="205" y="864">S</text></g>
<g font-size="9" fill="#ff0" text-anchor="middle"><text x="246.500" y="847">M</text><text x="246.500" y="856">A</text><text x="246.500" y="866">P</text></g>

<!-- TOP RIGHT panel -->
<text class="y" x="583" y="21" font-size="18" textLength="175" lengthAdjust="spacingAndGlyphs">7–aug–1997,06:05:00</text>
<text class="w" x="769" y="21" font-size="18" textLength="313" lengthAdjust="spacingAndGlyphs">Planar cross–section plot.  Contour of</text>
<text class="w" x="582" y="48" font-size="18" textLength="174" lengthAdjust="spacingAndGlyphs">maxdz using: rhb_3d.</text>
<path d="M1048 28.500H1133M1048 335.500H1133" stroke="#999"/>
<g class="p">
<rect x="622" y="276" width="43" height="23" fill="#00e696"/><rect x="632" y="276" width="14" height="23" fill="#00b4e6"/><rect x="663" y="276" width="2" height="23" fill="#00724c"/>
</g>
<path fill="#c4c4c4" d="M751 236L760 232V218H837V225H910L953 231V299H730V280Z"/>
<path fill="#00724c" d="M682 236H751L742.600 247L733 260L730 280V299H682Z"/>
<path fill="#00e696" d="M682 240H718.500L737 236L718.500 252H682Z"/>
<path fill="#00b4e6" d="M682 236H721L714 240H682Z"/>
<path fill="#d89030" d="M759 248L793 233L830 229L867 232L889 238L910 248L953 253V299H762L758 283V257Z"/>
<path fill="#eeb41e" d="M782 299L782 280L787 267L795 258L811 257L834 255L852 258L871 265L878 275L891 290L897 299Z"/>
<path fill="#00724c" d="M910 225H953V231Z"/>
<g class="p"><rect x="760" y="207" width="77" height="5" fill="#00e696"/><rect x="760" y="212" width="77" height="6" fill="#00724c"/></g>
<g fill="none" stroke="#fff">
<path d="M622.500 29.500H1048.500V311.500H622.500Z"/>
<path d="M676 29V36M730 29V36M783 29V36M836 29V36M888.500 29V36M942 29V36M995 29V36M676 311V304M730 311V304M783 311V304M836 311V304M888.500 311V304M942 311V304M995 311V304"/>
<path d="M622 57.500H633M622 85.500H633M622 114.500H633M622 142.500H633M622 170.500H633M622 198.500H633M622 226.500H633M622 255.500H633M622 283.500H633M1048 57.500H1037M1048 85.500H1037M1048 114.500H1037M1048 142.500H1037M1048 170.500H1037M1048 198.500H1037M1048 226.500H1037M1048 255.500H1037M1048 283.500H1037"/>
</g>
<g class="t" text-anchor="end" fill="#fff"><text x="620" y="30">20</text><text x="620" y="87">16</text><text x="620" y="143">12</text><text x="620" y="199">8</text><text x="620" y="256">4</text><text x="620" y="312">0</text></g>
<g class="t" text-anchor="middle"><text x="622" y="323">0.0</text><text x="729" y="323">5.6</text><text x="836" y="323">11.2</text><text x="943" y="323">16.9</text><text x="1043" y="323">22</text></g>
<text class="s" x="803" y="331" textLength="66" lengthAdjust="spacingAndGlyphs">Distance in km</text>
<text transform="translate(604 217) rotate(-90)" style="font-family:'Liberation Mono',monospace;font-size:12px" fill="#fff" textLength="95" lengthAdjust="spacing">km above MSL</text>
<text class="t" x="1051" y="44" textLength="34" lengthAdjust="spacingAndGlyphs">maxdz</text>
<g class="p">
<rect x="1050" y="52" width="10" height="17" fill="#ff8080"/><rect x="1050" y="69" width="10" height="17" fill="#ff9090"/><rect x="1050" y="86" width="10" height="17" fill="#ffb060"/><rect x="1050" y="103" width="10" height="17" fill="#ffd8b0"/><rect x="1050" y="120" width="10" height="17" fill="#ffd90f"/><rect x="1050" y="137" width="10" height="17" fill="#eeb41e"/><rect x="1050" y="154" width="10" height="17" fill="#d89030"/><rect x="1050" y="171" width="10" height="17" fill="#c4c4c4"/><rect x="1050" y="188" width="10" height="17" fill="#00724c"/><rect x="1050" y="205" width="10" height="17" fill="#00e696"/><rect x="1050" y="222" width="10" height="17" fill="#00b4e6"/><rect x="1050" y="239" width="10" height="17" fill="#0070e6"/><rect x="1050" y="256" width="10" height="17" fill="#1040e0"/><rect x="1050" y="273" width="10" height="17" fill="#4010e0"/><rect x="1050" y="290" width="10" height="17" fill="#6a10e8"/><rect x="1050" y="307" width="10" height="17" fill="#8000ff"/>
</g>
<g class="t"><text x="1065" y="65">62.5</text><text x="1065" y="82">57.5</text><text x="1065" y="99">52.5</text><text x="1065" y="116">47.5</text><text x="1065" y="133">42.5</text><text x="1065" y="150">37.5</text><text x="1065" y="167">32.5</text><text x="1065" y="184">27.5</text><text x="1065" y="201">22.5</text><text x="1065" y="218">17.5</text><text x="1065" y="235">12.5</text><text x="1065" y="252">7.5</text><text x="1065" y="269">2.5</text><text x="1065" y="286">–2.5</text><text x="1065" y="303">–7.5</text><text x="1065" y="320">–12.5</text></g>
<!-- buttons -->
<g stroke="#a8a8a8" class="p"><rect x="577.500" y="336.500" width="45" height="47" fill="#191970"/><rect x="624.500" y="336.500" width="45" height="47" fill="#191970"/><rect x="671.500" y="336.500" width="45" height="47" fill="#696969"/><rect x="718.500" y="336.500" width="45" height="47" fill="#696969"/>
<rect x="579.500" y="720.500" width="45" height="47" fill="#191970"/><rect x="626.500" y="720.500" width="45" height="47" fill="#191970"/><rect x="673.500" y="720.500" width="45" height="47" fill="#696969"/><rect x="720.500" y="720.500" width="45" height="47" fill="#696969"/></g>
<rect x="638" y="351" width="15" height="16" fill="url(#ck)"/><rect x="685" y="351" width="15" height="16" fill="url(#ckw)"/><rect x="732" y="351" width="15" height="16" fill="url(#ckw)"/>
<rect x="640" y="735" width="15" height="16" fill="url(#ck)"/><rect x="687" y="735" width="15" height="16" fill="url(#ckw)"/><rect x="734" y="735" width="15" height="16" fill="url(#ckw)"/>
<g style="color:#ff0"><use href="#z" x="577" y="336" width="46" height="48"/><use href="#cr" x="624" y="336" width="46" height="48"/><use href="#z" x="579" y="720" width="46" height="48"/><use href="#cr" x="626" y="720" width="46" height="48"/></g>
<g style="color:#e4e4e4"><use href="#cr" x="671" y="336" width="46" height="48"/><use href="#cr" x="718" y="336" width="46" height="48"/><use href="#cr" x="673" y="720" width="46" height="48"/><use href="#cr" x="720" y="720" width="46" height="48"/></g>
<g font-size="7.500" text-anchor="middle" font-weight="bold">
<text x="647" y="345" fill="#ff0">CROSS</text><text x="647" y="380" fill="#ff0">SECTION</text><text x="694" y="345" fill="#ddd">CROSS</text><text x="694" y="380" fill="#ddd">SECTION</text><text x="741" y="345" fill="#ddd">CROSS</text><text x="741" y="380" fill="#ddd">SECTION</text>
<text x="649" y="729" fill="#ff0">CROSS</text><text x="649" y="764" fill="#ff0">SECTION</text><text x="696" y="729" fill="#ddd">CROSS</text><text x="696" y="764" fill="#ddd">SECTION</text><text x="743" y="729" fill="#ddd">CROSS</text><text x="743" y="764" fill="#ddd">SECTION</text>
</g>

<!-- MIDDLE RIGHT panel -->
<text class="y" x="585" y="404" font-size="18" textLength="175" lengthAdjust="spacingAndGlyphs">7–aug–1997,06:05:00</text>
<text class="w" x="771" y="404" font-size="18" textLength="313" lengthAdjust="spacingAndGlyphs">Planar cross–section plot.  Contour of</text>
<text class="w" x="584" y="432" font-size="18" textLength="229" lengthAdjust="spacingAndGlyphs">radialvelocity using: rhb_3d.</text>
<path d="M1050 412.500H1135M1050 719.500H1135" stroke="#999"/>
<path fill="#04a510" d="M684 620H749L761.500 616L762 591H839V609H955V682.700H684Z"/>
<path fill="#0a8a18" d="M929 609H955V617L937 612ZM684 674L690 676L700 683H684Z"/>
<path fill="#00ff1a" d="M762 598L777 599L785 603L783 618L775 628L763 631L755 627L749 620.500L758 620L762 616Z"/>
<g fill="none" stroke="#fff">
<path d="M624.500 413.500H1050.500V695.500H624.500Z"/>
<path d="M678 413V420M731 413V420M785 413V420M838 413V420M890 413V420M944 413V420M997 413V420M678 695V688M731 695V688M785 695V688M838 695V688M890 695V688M944 695V688M997 695V688"/>
<path d="M624 441.500H636M624 469.500H636M624 498.500H636M624 526.500H636M624 554.500H636M624 582.500H636M624 610.500H636M624 639.500H636M624 667.500H636M1050 441.500H1038M1050 469.500H1038M1050 498.500H1038M1050 526.500H1038M1050 554.500H1038M1050 582.500H1038M1050 610.500H1038M1050 639.500H1038M1050 667.500H1038"/>
</g>
<g class="t" text-anchor="end"><text x="622" y="414">20</text><text x="622" y="470">16</text><text x="622" y="527">12</text><text x="622" y="583">8</text><text x="622" y="640">4</text><text x="622" y="696">0</text></g>
<g class="t" text-anchor="middle"><text x="624" y="706">0.0</text><text x="731" y="706">5.6</text><text x="838" y="706">11.2</text><text x="944" y="706">16.9</text><text x="1045" y="706">22</text></g>
<text class="s" x="805" y="715" textLength="66" lengthAdjust="spacingAndGlyphs">Distance in km</text>
<text transform="translate(605 601) rotate(-90)" style="font-family:'Liberation Mono',monospace;font-size:12px" fill="#fff" textLength="95" lengthAdjust="spacing">km above MSL</text>
<text class="t" x="1052" y="428" textLength="75" lengthAdjust="spacingAndGlyphs">radialvelocity</text>
<g class="p">
<rect x="1052" y="436" width="10" height="11" fill="#f00"/><rect x="1052" y="447" width="10" height="11" fill="#c00"/><rect x="1052" y="458" width="10" height="11" fill="#800"/><rect x="1052" y="469" width="10" height="11" fill="#e05000"/><rect x="1052" y="480" width="10" height="11" fill="#ff7800"/><rect x="1052" y="491" width="10" height="11" fill="#ff5a5a"/><rect x="1052" y="502" width="10" height="11" fill="#ff8c8c"/><rect x="1052" y="513" width="10" height="11" fill="#ffb9b9"/><rect x="1052" y="524" width="10" height="11" fill="#ff0"/><rect x="1052" y="535" width="10" height="11" fill="#ffb522"/><rect x="1052" y="546" width="10" height="11" fill="#d89060"/><rect x="1052" y="557" width="10" height="11" fill="#a84a00"/><rect x="1052" y="568" width="10" height="11" fill="#b0b0b0"/><rect x="1052" y="579" width="10" height="11" fill="#005010"/><rect x="1052" y="590" width="10" height="11" fill="#088818"/><rect x="1052" y="601" width="10" height="11" fill="#08a818"/><rect x="1052" y="612" width="10" height="11" fill="#00ff20"/><rect x="1052" y="623" width="10" height="11" fill="#00c0ff"/><rect x="1052" y="634" width="10" height="11" fill="#0080ff"/><rect x="1052" y="645" width="10" height="11" fill="#0010d0"/><rect x="1052" y="656" width="10" height="11" fill="#0020a0"/><rect x="1052" y="667" width="10" height="11" fill="#000080"/><rect x="1052" y="678" width="10" height="11" fill="#8888b0"/><rect x="1052" y="689" width="10" height="11" fill="#505080"/><rect x="1052" y="700" width="10" height="11" fill="#707070"/>
</g>
<g class="t"><text x="1067" y="446">24.0</text><text x="1067" y="457">22.0</text><text x="1067" y="468">20.0</text><text x="1067" y="479">18.0</text><text x="1067" y="490">16.0</text><text x="1067" y="501">14.0</text><text x="1067" y="512">12.0</text><text x="1067" y="523">10.0</text><text x="1067" y="534">8.0</text><text x="1067" y="545">6.0</text><text x="1067" y="556">4.0</text><text x="1067" y="567">2.0</text><text x="1067" y="578">0.0</text><text x="1067" y="589">–2.0</text><text x="1067" y="600">–4.0</text><text x="1067" y="611">–6.0</text><text x="1067" y="622">–8.0</text><text x="1067" y="633">–10.0</text><text x="1067" y="644">–12.0</text><text x="1067" y="655">–14.0</text><text x="1067" y="666">–16.0</text><text x="1067" y="677">–18.0</text><text x="1067" y="688">–20.0</text><text x="1067" y="699">–22.0</text><text x="1067" y="710">–24.0</text></g>
</svg>
</body></html>
